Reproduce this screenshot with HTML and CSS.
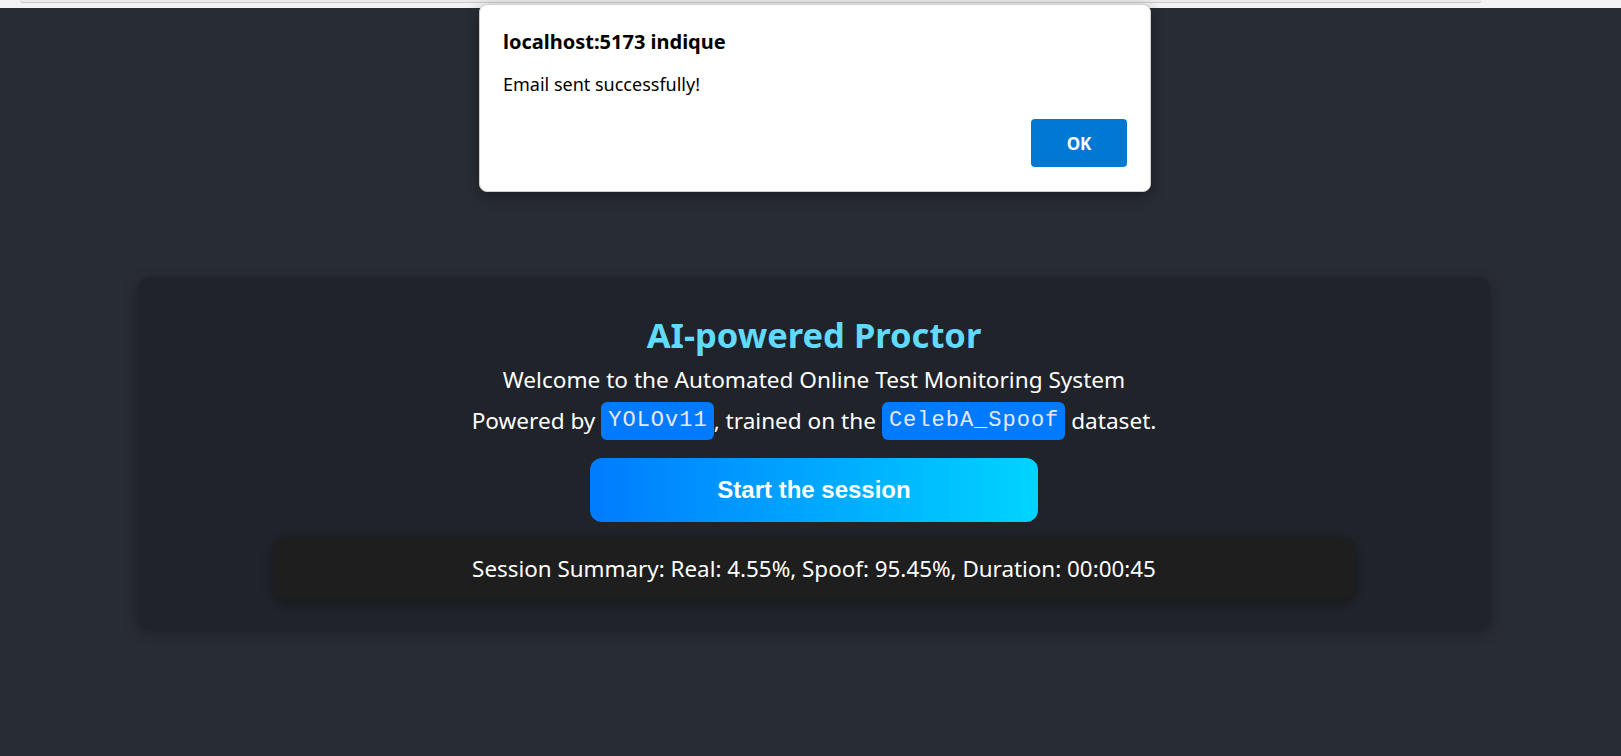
FILE: index.html
```html
<!DOCTYPE html>
<html lang="en">
<head>
<meta charset="utf-8">
<title>AI-powered Proctor</title>
<link rel="stylesheet" href="styles.css">
</head>
<body>
<div class="chrome"><div class="omnibox"></div></div>
<main class="page">
  <section class="card">
    <h1 class="title">AI-powered Proctor</h1>
    <p class="lead">Welcome to the Automated Online Test Monitoring System</p>
    <p class="lead powered">Powered by <code class="tag">YOLOv11</code>, trained on the <code class="tag">CelebA_Spoof</code> dataset.</p>
    <button class="start">Start the session</button>
    <div class="summary">Session Summary: Real: 4.55%, Spoof: 95.45%, Duration: 00:00:45</div>
  </section>
</main>
<div class="dialog">
  <div class="dialog-title">localhost:5173 indique</div>
  <div class="dialog-msg">Email sent successfully!</div>
  <div class="dialog-actions"><button class="ok">OK</button></div>
</div>
</body>
</html>
```

FILE: styles.css
```css
* { box-sizing: border-box; }
html, body { margin: 0; padding: 0; }
body {
  background: #282c34;
  font-family: "Noto Sans", "Open Sans", sans-serif;
  color: #ffffff;
  height: 756px;
  overflow: hidden;
  position: relative;
}
.chrome {
  height: 8px;
  background: #f3f3f3;
  padding: 0 139px 0 20px;
}
.omnibox {
  height: 3px;
  border-bottom: 1px solid #c9c9c9;
  border-radius: 0 0 8px 8px;
  background: #ebebeb;
}
.page {
  padding-top: 269px;
  padding-left: 138px;
}
.card {
  width: 1352px;
  background: #20232a;
  border-radius: 12px;
  box-shadow: 0 4px 14px rgba(0, 0, 0, 0.35);
  padding: 37px 0 29px;
  display: flex;
  flex-direction: column;
  align-items: center;
}
.title {
  margin: 0;
  font-size: 34.5px;
  line-height: 42px;
  font-weight: 700;
  color: #61dafb;
}
.lead {
  margin: 9px 0 0;
  font-size: 22.6px;
  line-height: 30px;
}
.powered {
  margin-top: 6px;
  line-height: 40px;
}
.tag {
  display: inline-block;
  font-family: "Liberation Mono", "Courier New", monospace;
  font-size: 22px;
  letter-spacing: 1px;
  line-height: 38px;
  height: 38px;
  padding: 0 6px 0 7px;
  background: #007bff;
  color: #e8e8f6;
  border-radius: 6px;
  vertical-align: top;
  margin-top: 1px;
}
.start {
  margin-top: 17px;
  width: 448px;
  height: 64px;
  border: none;
  border-radius: 12px;
  background: linear-gradient(90deg, #007bff, #00d4ff);
  color: #ffffff;
  font-family: "Liberation Sans", Arial, sans-serif;
  font-weight: 700;
  font-size: 24px;
}
.summary {
  margin-top: 15px;
  width: 80%;
  height: 62px;
  background: #1e1e1e;
  border-radius: 12px;
  box-shadow: 0 4px 12px rgba(0, 0, 0, 0.3);
  display: flex;
  align-items: center;
  justify-content: center;
  font-size: 22.4px;
}
.dialog {
  position: absolute;
  top: 4px;
  left: 479px;
  width: 672px;
  height: 188px;
  background: #ffffff;
  border-radius: 8px;
  border: 1px solid #d0d0d0;
  box-shadow: 0 4px 14px rgba(0, 0, 0, 0.35);
  padding: 25px 23px 24px;
  color: #000000;
}
.dialog-title {
  font-size: 20px;
  font-weight: 700;
  line-height: 24px;
}
.dialog-msg {
  margin-top: 18px;
  font-size: 18px;
  line-height: 24px;
}
.dialog-actions {
  margin-top: 23px;
  display: flex;
  justify-content: flex-end;
}
.ok {
  width: 96px;
  height: 48px;
  border: none;
  border-radius: 4px;
  background: #0078d4;
  color: #ffffff;
  font-family: "Noto Sans", sans-serif;
  font-weight: 700;
  font-size: 17px;
}
```
